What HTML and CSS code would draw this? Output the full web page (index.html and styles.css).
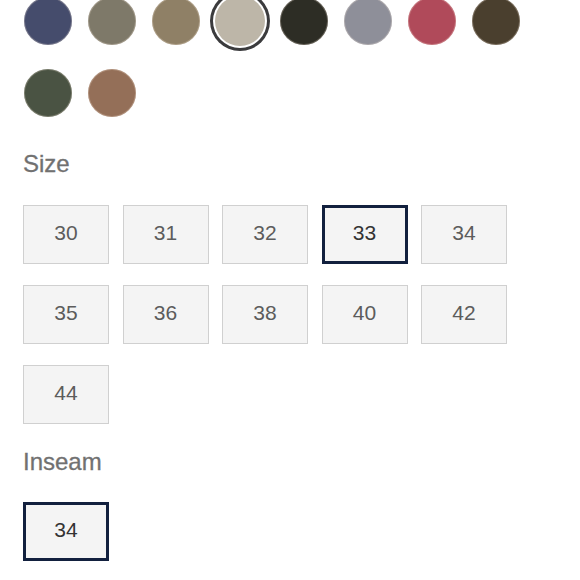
FILE: index.html
```html
<!DOCTYPE html>
<html>
<head>
<meta charset="utf-8">
<link rel="stylesheet" href="styles.css">
</head>
<body>
<div class="page">
  <div class="swatches">
    <span class="swatch" style="background:#454c6c"></span>
    <span class="swatch" style="background:#7e7969"></span>
    <span class="swatch" style="background:#8f8066"></span>
    <span class="swatch selected" style="background:#bdb6a8"></span>
    <span class="swatch" style="background:#2d2d25"></span>
    <span class="swatch" style="background:#8e8f99"></span>
    <span class="swatch" style="background:#b04a5a"></span>
    <span class="swatch" style="background:#4a3f2e"></span>
    <span class="swatch" style="background:#4a5343"></span>
    <span class="swatch" style="background:#946f58"></span>
  </div>

  <div class="label label-size">Size</div>
  <div class="options">
    <div class="opt">30</div>
    <div class="opt">31</div>
    <div class="opt">32</div>
    <div class="opt selected">33</div>
    <div class="opt">34</div>
    <div class="opt">35</div>
    <div class="opt">36</div>
    <div class="opt">38</div>
    <div class="opt">40</div>
    <div class="opt">42</div>
    <div class="opt">44</div>
  </div>

  <div class="label label-inseam">Inseam</div>
  <div class="options">
    <div class="opt selected">34</div>
  </div>
</div>
</body>
</html>
```

FILE: styles.css
```css
html, body {
  margin: 0;
  padding: 0;
  background: #ffffff;
}

body {
  font-family: "Liberation Sans", Arial, sans-serif;
  width: 580px;
  height: 580px;
  overflow: hidden;
}

.page {
  padding-left: 23px;
  margin-top: -3px;
}

.swatches {
  display: flex;
  flex-wrap: wrap;
  column-gap: 16px;
  row-gap: 24px;
  padding-left: 1px;
  width: 520px;
}

.swatch {
  display: block;
  width: 48px;
  height: 48px;
  border-radius: 50%;
  box-sizing: border-box;
  box-shadow: inset 0 0 0 1px rgba(255, 240, 225, 0.25);
}

.swatch.selected {
  width: 50px;
  height: 50px;
  margin: -1px;
  box-shadow: 0 0 0 2px #ffffff, 0 0 0 5px #3b3b3d;
}

.label {
  font-size: 24px;
  line-height: 28px;
  color: #717171;
  margin-bottom: 27px;
  -webkit-text-stroke: 0.3px #717171;
}

.label-size {
  margin-top: 33px;
}

.label-inseam {
  margin-top: 24px;
  margin-bottom: 26px;
}

.options {
  display: flex;
  flex-wrap: wrap;
  column-gap: 13.5px;
  row-gap: 21px;
  width: 520px;
}

.opt {
  width: 86px;
  height: 59px;
  box-sizing: border-box;
  border: 1px solid #d0d0d0;
  background: #f4f4f4;
  color: #5c5c5c;
  font-size: 21px;
  padding-bottom: 3px;
  display: flex;
  align-items: center;
  justify-content: center;
}

.opt.selected {
  border: 3px solid #12203e;
  color: #333333;
}
```
